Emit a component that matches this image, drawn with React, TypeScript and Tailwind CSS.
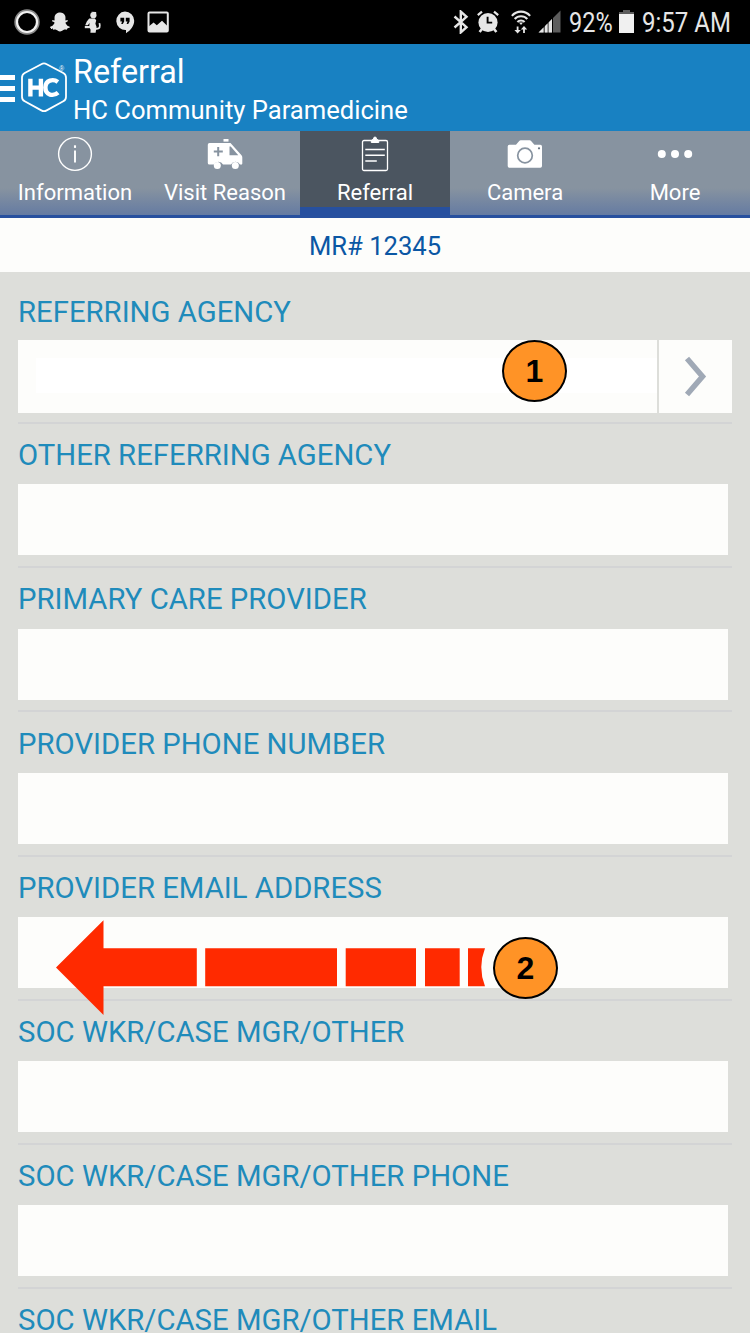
import type { ReactNode } from "react";
import { FaSnapchatGhost } from "react-icons/fa";

function NotificationIcons() {
  return (
    <div className="flex h-11 items-center text-[#e6e6e6]">
      <svg className="ml-[14px]" width="26" height="28" viewBox="0 0 26 28" fill="none">
        <circle cx="13" cy="14" r="11.2" stroke="#8a8a8a" strokeWidth="3" />
        <circle cx="13" cy="14" r="10" stroke="#f2f2f2" strokeWidth="2.2" />
      </svg>
      <FaSnapchatGhost className="ml-[10px]" size={20} />
      <svg className="ml-[14px]" width="18" height="22" viewBox="0 0 18 22" fill="currentColor">
        <circle cx="9.4" cy="4.2" r="3.1" />
        <path d="M7.400.8 12.200 1 12 4Z" />
        <path d="M5.2 7.600h5.600l1.400 1.600-.8 3.600 1.200 3.200L11.600 21.800H6.400l.2-3-1.400-3 .4-3.800-1.800 2.200H1.200L2.800 10.400Z" />
        <path d="M11 17.800c3.400.4 5-.6 4.800-3.600l-.4-2" fill="none" stroke="currentColor" strokeWidth="1.700" />
        <path d="M.8 15H6.500V17.200H.8Z" />
      </svg>
      <svg className="ml-[13px]" width="20" height="23" viewBox="0 0 20 23">
        <path d="M10 0.6a9.2 9.2 0 0 1 9.2 9.2c0 5.4-3.8 9.8-8.2 12.4V19A9.2 9.2 0 1 1 10 .6Z" fill="currentColor" />
        <path d="M5.4 6.8h3.8v3.8L7.8 13H6.2l.9-2.4H5.4Zm5.4 0h3.8v3.8L13.2 13h-1.6l.9-2.4h-1.7Z" fill="#000" />
      </svg>
      <svg className="ml-[12px]" width="22" height="22" viewBox="0 0 22 22">
        <rect x="1.500" y="1.6" width="19.300" height="18.8" rx="1" fill="none" stroke="currentColor" strokeWidth="2" />
        <path d="M2 15.2 6.6 11.400l3.2 2.900 5.200-4.600 5.200 5V20H2Z" fill="currentColor" />
      </svg>
    </div>
  );
}

function SystemIcons() {
  return (
    <div className="mr-[18px] flex h-11 items-center text-[#e6e6e6]">
      <svg width="16" height="24" viewBox="0 0 16 24" fill="none" stroke="currentColor" strokeWidth="2.400">
        <path d="m1.5 6.5 12 10.7-5.7 5.2V1.6l5.7 5.2L1.5 17.5" />
      </svg>
      <svg className="ml-[8px]" width="22" height="24" viewBox="0 0 22 24" fill="none" stroke="currentColor">
        <circle cx="11" cy="12.500" r="9.600" fill="currentColor" stroke="none" />
        <path d="M.8 5.2 5 1.6M21.2 5.2 17 1.6" strokeWidth="2.2" />
        <path d="m5 19-2.4 3M17 19l2.4 3" strokeWidth="2.6" />
        <path d="M10.6 6.8v5.8h4.6" stroke="#000" strokeWidth="1.9" />
      </svg>
      <svg className="ml-[12px]" width="20" height="24" viewBox="0 0 20 24" fill="none" stroke="currentColor">
        <path d="M.9 5.9c4.8-5.7 13.4-5.7 18.2 0M3.7 9c3.3-3.7 9.3-3.7 12.6 0M6.4 12c2-2.1 5.2-2.1 7.2 0" strokeWidth="2.1" />
        <path d="M8 12.5 10 15l2-2.5Z" fill="currentColor" stroke="none" />
        <path d="M6.6 16.4v5M13 23v-5" strokeWidth="1.8" />
        <path d="M3.4 20h6.4l-3.2 3.4ZM9.8 19.4h6.4L13 16Z" fill="currentColor" stroke="none" />
      </svg>
      <svg className="ml-[7px]" width="23" height="24" viewBox="0 0 23 24">
        <path d="M22.5.5v22H15V8Z" fill="#5c5c5c" />
        <path d="M14 9v13.500h-3.200V12.200ZM9.500 13.500v9H7v-6.500ZM5.500 17.500v5H.5Z" fill="currentColor" />
        <path d="M14 9v13.500H.5Z" fill="#e6e6e6" fillOpacity=".4" />
      </svg>
      <span className="mt-[2px] ml-[8px] block w-[44px] origin-left scale-x-[0.87] text-[27px] leading-[44px] whitespace-nowrap">
        92%
      </span>
      <svg className="ml-[6px]" width="15" height="24" viewBox="0 0 15 24">
        <path d="M4 0h7v2h4v3H0V2h4Z" fill="#5c5c5c" />
        <path d="M0 4h15v19H0Z" fill="#f0f0f0" />
      </svg>
      <span className="mt-[2px] ml-[8px] block w-[90px] origin-left scale-x-[0.89] text-[27px] leading-[44px] whitespace-nowrap">
        9:57 AM
      </span>
    </div>
  );
}

function Logo() {
  return (
    <svg width="48" height="52" viewBox="0 0 48 52">
      <path
        d="M20.300 2.200q2.700-1.500 5.400 0L42.300 11q2.700 1.500 2.700 4.600V34.700q0 3.100-2.700 4.600L25.700 48.400q-2.700 1.500-5.400 0L3.700 39.300Q1 37.800 1 34.700V15.600Q1 12.500 3.700 11Z"
        fill="none"
        stroke="#fff"
        strokeWidth="1.8"
      />
      <path d="M9.400 16.700v17.800M19.900 16.700v17.800M9.400 25.600h11M36.900 20c-4.500-3.400-12.500-2.200-12.500 5.600s8 9 12.700 5" fill="none" stroke="#fff" strokeWidth="4.400" />
      <text x="38.200" y="8.500" fontSize="6.500" fill="#fff" fontFamily="Liberation Sans">®</text>
    </svg>
  );
}

function InfoIcon() {
  return (
    <svg width="36" height="36" viewBox="0 0 36 36" fill="none" stroke="#fff">
      <circle cx="18" cy="18" r="16.400" strokeWidth="1.400" />
      <path d="M18 14.500V26.500" strokeWidth="1.900" />
      <path d="M18 9.300v2.600" strokeWidth="2.100" />
    </svg>
  );
}

function AmbulanceIcon() {
  return (
    <svg width="36" height="36" viewBox="0 0 36 36" fill="#fff">
      <rect x="16.500" y="3" width="5" height="2.600" />
      <path
        fillRule="evenodd"
        d="M2.500 7H23.500l11 12.200q.8 1 .8 2.200v6q0 1.200-1.200 1.200H33a5 5 0 0 0-9 0H16a5 5 0 0 0-9 0H2.500Q.8 28.600.8 27V8.700Q.8 7 2.500 7Zm20 3.500v8.700h8.800l-7.600-8.700ZM10.200 11v3.500H6.800v2h3.400v3.700h2v-3.700h3.600v-2h-3.600V11Z"
      />
      <circle cx="10.300" cy="29.500" r="3.500" />
      <circle cx="28.300" cy="29.500" r="3.500" />
    </svg>
  );
}

function ClipboardIcon() {
  return (
    <svg width="36" height="36" viewBox="0 0 36 36" fill="none" stroke="#fff">
      <rect x="5.500" y="4.500" width="25" height="30" rx="1.500" strokeWidth="1.300" />
      <path d="M8.300 13.500h19.500M8.300 19.300h19.500M8.300 25h11.500" strokeWidth="1.500" />
      <path d="M14.300 6.500V4.500l2.200-1.500Q16.500 1 18 1t1.500 2L21.800 4.500v2Z" fill="#fff" />
    </svg>
  );
}

function CameraIcon() {
  return (
    <svg width="36" height="36" viewBox="0 0 36 36">
      <path d="M2.300 8.800H9L12.200 5q.7-.7 1.500-.7h9q.8 0 1.400.7l3.300 3.800h5.900q1.700 0 1.700 1.700V30q0 1.700-1.700 1.700H2.300Q.7 31.700.7 30V10.500q0-1.700 1.600-1.700Z" fill="#fff" />
      <circle cx="18" cy="19.500" r="7.300" fill="none" stroke="#8793a0" strokeWidth="1.700" />
      <circle cx="32" cy="12.300" r="1.100" fill="#65717f" />
    </svg>
  );
}

function MoreIcon() {
  return (
    <svg width="36" height="36" viewBox="0 0 36 36" fill="#fff">
      <circle cx="4.800" cy="18" r="4" />
      <circle cx="18" cy="18" r="4" />
      <circle cx="31.200" cy="18" r="4" />
    </svg>
  );
}

function Tab({ label, icon, active = false }: { label: string; icon: ReactNode; active?: boolean }) {
  return (
    <div
      className={
        active
          ? "flex flex-1 flex-col items-center border-b-8 border-[#27509f] bg-[#4b5560] pt-[5px]"
          : "flex flex-1 flex-col items-center bg-linear-to-b from-[#8793a0] from-68% to-[#657ba2] pt-[5px]"
      }
    >
      {icon}
      <span className="mt-[8px] text-[22px] leading-[26px] whitespace-nowrap">{label}</span>
    </div>
  );
}

function StepBadge({ n }: { n: number }) {
  return (
    <div className="flex h-[62px] w-[65px] items-center justify-center rounded-[50%] border-2 border-black bg-[#ff9326] font-['Liberation_Sans',sans-serif] text-[32px] leading-none font-bold text-black">
      {n}
    </div>
  );
}

function DashedArrow() {
  return (
    <svg width="432" height="96" viewBox="0 0 432 96" fill="#ff2a00">
      <path d="M0 47.500 47.500.2V28.200H140.800V66.300H47.500V95Z" />
      <path d="M149.200 28.200H281V66.300H149.200ZM289.700 28.200H360V66.300H289.700ZM369 28.200H403.700V66.300H369Z" />
      <path d="M412 28.200H429Q421.500 47.300 429 66.300H412Z" />
    </svg>
  );
}

function Field({ label, children }: { label: string; children?: ReactNode }) {
  return (
    <section className="mx-[18px] h-[144.220px] shrink-0 border-b-2 border-[#d3d4d5] pt-[13.100px]">
      <h2 className="text-[29.300px] leading-[36px] whitespace-nowrap text-[#1f8bbb]">{label}</h2>
      <div className="relative mt-[11.200px] mr-[4px] h-[71px] bg-[#fdfdfb]">{children}</div>
    </section>
  );
}

export default function App() {
  return (
    <div className="flex h-[1333px] w-[750px] flex-col overflow-hidden bg-[#dddeda] font-[Roboto,sans-serif] text-white">
      <div className="flex h-11 shrink-0 justify-between bg-black">
        <NotificationIcons />
        <SystemIcons />
      </div>

      <header className="flex h-[87px] shrink-0 items-start bg-[#1881c2]">
        <div className="mt-[31px] flex w-[15px] flex-col gap-[6px]">
          <div className="h-[5px] bg-white" />
          <div className="h-[5px] bg-white" />
          <div className="h-[5px] bg-white" />
        </div>
        <div className="mt-[18px] ml-[6px]">
          <Logo />
        </div>
        <div className="ml-[4px] pt-[9px] whitespace-nowrap">
          <h1 className="text-[32.300px] leading-[38px]">Referral</h1>
          <p className="mt-[4px] text-[25.600px] leading-[30px]">HC Community Paramedicine</p>
        </div>
      </header>

      <nav className="flex h-[87px] shrink-0 border-b-[3.500px] border-[#27509f]">
        <Tab label="Information" icon={<InfoIcon />} />
        <Tab label="Visit Reason" icon={<AmbulanceIcon />} />
        <Tab label="Referral" icon={<ClipboardIcon />} active />
        <Tab label="Camera" icon={<CameraIcon />} />
        <Tab label="More" icon={<MoreIcon />} />
      </nav>

      <div className="h-[54px] shrink-0 bg-[#fdfdfb] text-center text-[25.600px] leading-[56px] text-[#0b57a4]">
        MR# 12345
      </div>

      <section className="mx-[18px] h-[152px] shrink-0 border-b-2 border-[#d3d4d5] pt-[22px]">
        <h2 className="text-[29.300px] leading-[36px] whitespace-nowrap text-[#1f8bbb]">REFERRING AGENCY</h2>
        <div className="relative mt-[10px] flex h-[73px] gap-[2px]">
          <div className="flex-1 bg-[#fdfdfb] py-[18px] pl-[18px]">
            <div className="h-[35px] bg-white" />
          </div>
          <div className="flex w-[73px] items-center justify-center bg-[#fdfdfb]">
            <svg width="24" height="42" viewBox="0 0 24 42" fill="none" stroke="#a0a9b6" strokeWidth="5.500">
              <path d="m3 2.500 15.500 18L3 38.500" />
            </svg>
          </div>
          <div className="absolute top-0 left-[484px]">
            <StepBadge n={1} />
          </div>
        </div>
      </section>

      <Field label="OTHER REFERRING AGENCY" />
      <Field label="PRIMARY CARE PROVIDER" />
      <Field label="PROVIDER PHONE NUMBER" />
      <Field label="PROVIDER EMAIL ADDRESS">
        <div className="absolute top-[3px] left-[38px]">
          <DashedArrow />
        </div>
        <div className="absolute top-[20px] left-[475px]">
          <StepBadge n={2} />
        </div>
      </Field>
      <Field label="SOC WKR/CASE MGR/OTHER" />
      <Field label="SOC WKR/CASE MGR/OTHER PHONE" />
      <Field label="SOC WKR/CASE MGR/OTHER EMAIL" />
    </div>
  );
}
